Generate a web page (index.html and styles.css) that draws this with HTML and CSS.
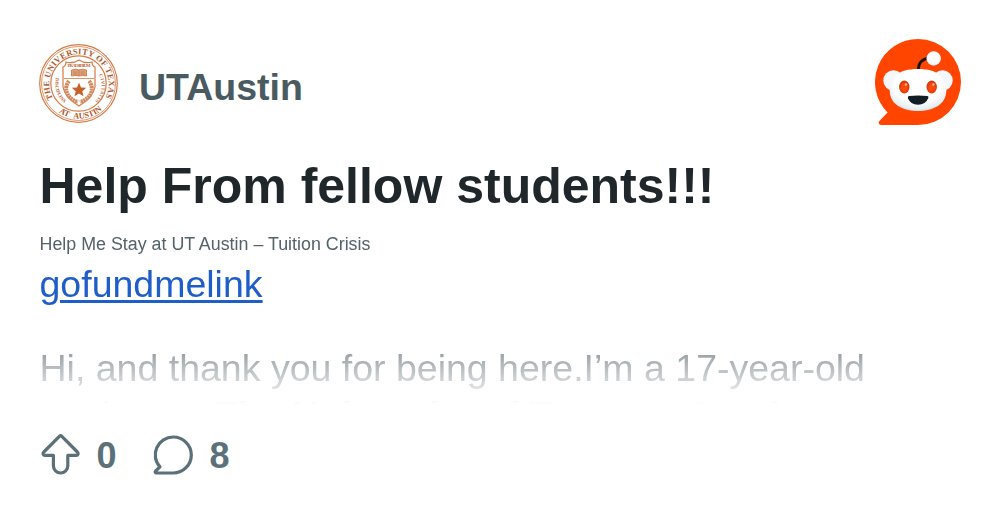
FILE: index.html
```html
<!DOCTYPE html>
<html lang="en">

<head>
  <meta charset="utf-8">
  <title>Help From fellow students!!!</title>
  <link rel="stylesheet" href="styles.css">
</head>

<body>
  <div class="card">
    <div class="header">
      <svg class="seal" viewBox="0 0 80 80">
        <defs>
          <path id="arc-top" d="M 14.1 54.5 A 29.7 29.7 0 1 1 65.9 54.5" />
          <path id="arc-bottom" d="M 12 60.5 A 34.7 34.7 0 0 0 68 60.5" />
          <path id="arc-left" d="M 18 31 A 24 24 0 0 0 33 63" />
          <path id="arc-right" d="M 57 27 A 21.5 21.5 0 0 1 48 62" />
        </defs>
        <circle cx="39.5" cy="39.5" r="38.8" class="ring" />
        <circle cx="39.5" cy="39.5" r="37" class="ring thin" />
        <circle cx="39.5" cy="39.5" r="27.7" class="ring" />
        <text class="seal-text"><textPath href="#arc-top" textLength="122">THE UNIVERSITY OF TEXAS</textPath></text>
        <text class="seal-text place"><textPath href="#arc-bottom" startOffset="11" textLength="47">AT AUSTIN</textPath></text>
        <circle cx="8.5" cy="52" r="0.8" class="fill" />
        <circle cx="71" cy="52" r="0.8" class="fill" />
        <text class="motto"><textPath href="#arc-left" startOffset="3" textLength="28">DISCIPLINA</textPath></text>
        <text class="motto"><textPath href="#arc-right" startOffset="5" textLength="28">CIVITATIS</textPath></text>
        <path class="ring" d="M24 23 Q27 22 27 18 Q34 20 40 16 Q46 20 53 18 Q53 22 56 23 L56 43 Q54 54 40 62 Q26 54 24 43 Z" />
        <path class="ring thin" d="M25 34.5 H55" />
        <text x="28.5" y="22.7" class="motto" textLength="23">PRAESIDIUM</text>
        <path class="book" d="M32.5 26 Q37 24.5 40 26 Q43 24.5 47.5 26 V32 Q43 31 40 32 Q37 31 32.5 32 Z M40 26 V32 M34 28 H38.5 M41.5 28 H46 M34 30 H38.5 M41.5 30 H46" />
        <path class="wreath" d="M30 37 C25 43 26 54 39 58 M50 37 C55 43 54 54 41 58" />
        <path class="fill" d="M40 38.5 L42 43.4 L47.2 43.8 L43.3 47.2 L44.5 52.3 L40 49.6 L35.5 52.3 L36.7 47.2 L32.8 43.8 L38 43.4 Z" />
      </svg>
      <span class="subreddit">UTAustin</span>
      <svg class="logo" viewBox="0 0 86 86">
        <defs>
          <radialGradient id="face" cx="50%" cy="38%" r="68%">
            <stop offset="0.6" stop-color="#fff" />
            <stop offset="0.85" stop-color="#e6eef3" />
            <stop offset="1" stop-color="#a9b9c3" />
          </radialGradient>
          <radialGradient id="eye" cx="50%" cy="55%" r="55%">
            <stop offset="0.4" stop-color="#ff4a0c" />
            <stop offset="1" stop-color="#c8330b" />
          </radialGradient>
        </defs>
        <path fill="#ff4500" d="M43 0 A43 43 0 0 1 43 86 H6.5 C3.6 86 2.8 83.5 4.6 81.7 L12.6 73.4 A43 43 0 0 1 43 0 Z" />
        <path class="antenna" d="M43.3 31 C43.5 24 47 20 54 19.2" />
        <circle cx="58.7" cy="19.5" r="7.2" fill="url(#face)" />
        <circle cx="18.5" cy="41.5" r="10.2" fill="#f4f8fa" />
        <circle cx="67.5" cy="41.5" r="10.2" fill="#f4f8fa" />
        <path fill="url(#face)" d="M43 30 C53 30 60 32 65 36 C69 40 71.3 46 71.3 52 C71 65 59 72 43 72 C27 72 15 65 14.700 52 C14.700 46 17 40 21 36 C26 32 33 30 43 30 Z" />
        <ellipse cx="29.3" cy="48" rx="5.2" ry="6.5" fill="url(#eye)" />
        <ellipse cx="56.7" cy="48" rx="5.2" ry="6.5" fill="url(#eye)" />
        <circle cx="31" cy="45.5" r="1.2" fill="#ffb8a0" />
        <circle cx="58.4" cy="45.5" r="1.2" fill="#ffb8a0" />
        <path fill="#101e24" d="M34 57 Q43 56 52.5 57 Q54 57.2 53.2 59.2 Q50.5 65.7 43 65.7 Q35.5 65.7 33 59.2 Q32.4 57.2 34 57 Z" />
      </svg>
    </div>

    <h1 class="title">Help From fellow students!!!</h1>

    <div class="content">
      <p class="small">Help Me Stay at UT Austin – Tuition Crisis</p>
      <p class="link-line"><a class="link" href="#">gofundmelink</a></p>
      <p class="text">Hi, and thank you for being here.I’m a 17-year-old student at <b>The University of Texas at Austin</b></p>
    </div>

    <div class="footer">
      <svg class="icon upvote" viewBox="0 0 42 44">
        <path d="M20.6 3.2 L4.8 19 C3.6 20.400 4 22.4 6 22.4 H14.4 V32.8 A7.2 7.2 0 0 0 28.8 32.8 V22.4 H37.2 C39.2 22.4 39.6 20.4 38.4 19 L22.6 3.2 Q21.6 2.200 20.6 3.2 Z" />
      </svg>
      <span class="count votes">0</span>
      <svg class="icon comment" viewBox="0 0 42 44">
        <path d="M21.3 4 A17.8 17.8 0 0 1 21.3 40 H4.5 C3.2 40 2.8 38.9 3.6 38 L8 33.9 A17.8 17.8 0 0 1 21.3 4 Z" />
      </svg>
      <span class="count">8</span>
    </div>
  </div>
</body>

</html>
```
FILE: styles.css
```css
body {
  font-family: "Liberation Sans", Arial, sans-serif;
  margin: 0;
  background-color: #fff;
}

.card {
  box-sizing: border-box;
  width: 1000px;
  height: 521px;
  padding: 39px 39px 0;
  overflow: hidden;
}

.header {
  display: flex;
  height: 86px;
}

.seal {
  width: 80px;
  height: 80px;
  margin-top: 5px;
}

.ring {
  fill: none;
  stroke: #d47b45;
  stroke-width: 1.2;
}

.thin {
  stroke-width: 0.8;
}

.fill {
  fill: #c5622a;
}

.seal-text {
  font-family: "Liberation Serif", serif;
  font-size: 8.4px;
  font-weight: bold;
  fill: #b0582b;
}

.place {
  word-spacing: 3px;
}

.motto {
  font-family: "Liberation Serif", serif;
  font-size: 4.8px;
  font-weight: bold;
  fill: #b9693e;
}

.book {
  fill: #e0a680;
  stroke: #c87848;
  stroke-width: 0.9;
}

.wreath {
  fill: none;
  stroke: #d18a60;
  stroke-width: 4;
  stroke-dasharray: 2.2 0.5;
}

.subreddit {
  margin: 27px 0 0 20px;
  font-size: 37.5px;
  line-height: 43px;
  font-weight: bold;
  color: #4a5a61;
}

.logo {
  width: 86px;
  height: 86px;
  margin-left: auto;
}

.antenna {
  fill: none;
  stroke: #1c1518;
  stroke-width: 2.8;
}

.title {
  margin: 33px 0 0;
  padding-left: 0.5px;
  font-size: 50px;
  line-height: 56px;
  color: #20272b;
}

.content {
  height: 176px;
  margin-top: 15px;
  padding-left: 0.5px;
  overflow: hidden;
  color: #54626a;
  -webkit-mask-image: linear-gradient(#000 50%, transparent);
  mask-image: linear-gradient(#000 50%, transparent);
}

.content p {
  margin: 0;
}

.content .small {
  font-size: 17.85px;
  line-height: 30px;
}

.content .link-line {
  margin-top: 2px;
  font-size: 37.5px;
  line-height: 47px;
}

.link {
  color: #1f5dc8;
  text-decoration-thickness: 3px;
  text-underline-offset: 3px;
}

.content .text {
  margin-top: 37px;
  font-size: 37.5px;
  line-height: 47px;
}

.footer {
  display: flex;
  align-items: center;
  height: 44px;
  margin-top: 28px;
}

.icon {
  width: 42px;
  height: 44px;
  fill: none;
  stroke: #5b7078;
  stroke-width: 3.2;
  stroke-linejoin: round;
}

.count {
  margin-left: 15.5px;
  padding-top: 2px;
  font-size: 36px;
  font-weight: bold;
  line-height: 44px;
  color: #5b7078;
}

.votes {
  margin-right: 35.5px;
}
```
